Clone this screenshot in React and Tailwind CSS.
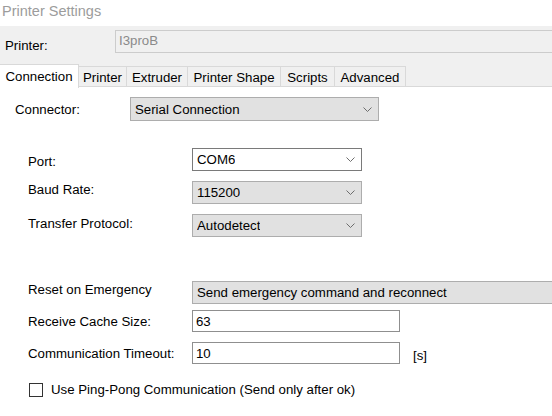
import React from 'react';

const font = { fontFamily: '"Liberation Sans", Arial, sans-serif' };

const Chevron = () => (
    <svg width="9" height="5" viewBox="0 0 9 5" className="shrink-0">
        <path d="M0.5 0.5 L4.5 4.5 L8.5 0.5" fill="none" stroke="#6d6d6d" strokeWidth="1" />
    </svg>
);

// combo box, gray (read only) or white (editable)
const Combo = ({ value, className, white }) => (
    <div
        className={
            'flex items-center justify-between pl-[4px] pr-[6px] border ' +
            (white ? 'bg-white border-[#7a7a7a] ' : 'bg-[#e1e1e1] border-[#adadad] ') +
            className
        }
    >
        <span className="truncate">{value}</span>
        <Chevron />
    </div>
);

const Field = ({ value, className }) => (
    <div className={'flex items-center pl-[3px] bg-white border border-[#8f8f8f] ' + className}>
        {value}
    </div>
);

const tabs = [
    { name: 'Connection', w: 'w-[79px]' },
    { name: 'Printer', w: 'w-[48px]' },
    { name: 'Extruder', w: 'w-[61px]' },
    { name: 'Printer Shape', w: 'w-[93px]' },
    { name: 'Scripts', w: 'w-[54px]' },
    { name: 'Advanced', w: 'w-[71px]' },
];

export default function App() {
    return (
        <div className="w-[552px] h-[416px] overflow-hidden bg-white text-[13.25px] leading-[15px] text-black flex flex-col" style={font}>
            {/* Title */}
            <div className="h-[26px] flex items-start pl-[2px] pt-[3px] text-[14.5px] leading-[17px] text-[#9c9c9c] shrink-0">
                Printer Settings
            </div>

            {/* Printer + tabs band */}
            <div className="bg-[#f0f0f0] shrink-0">
                <div className="flex items-start h-[37px] pt-[4px]">
                    <span className="w-[115px] pl-[5px] pt-[8px]">Printer:</span>
                    <div className="flex-1 h-[23px] border border-r-0 border-[#cccccc] bg-[#f0f0f0] text-[#8a8a8a] pl-[3px] pb-[2px] flex items-center -mr-[4px]">
                        I3proB
                    </div>
                </div>
                <div className="flex items-end h-[24px]">
                    {tabs.map((t, i) =>
                        i === 0 ? (
                            <div key={t.name} className={t.w + ' h-[24px] bg-white border-r border-t border-[#d9d9d9] flex items-center justify-center pb-[1px] -mb-px relative'}>
                                {t.name}
                            </div>
                        ) : (
                            <div key={t.name} className={t.w + ' h-[21px] border-r border-t border-b border-[#d9d9d9] flex items-center justify-center pt-[1px]'}>
                                {t.name}
                            </div>
                        )
                    )}
                    <div className="flex-1 border-b border-[#d9d9d9]" />
                </div>
            </div>

            {/* Connection panel */}
            <div className="flex flex-col">
                <div className="flex items-center mt-[10px]">
                    <span className="w-[130px] pl-[15px]">Connector:</span>
                    <Combo value="Serial Connection" className="w-[249px] h-[24px]" />
                </div>

                <div className="flex items-start mt-[27px]">
                    <span className="w-[192px] pl-[28px] pt-[6px]">Port:</span>
                    <Combo value="COM6" white className="w-[170px] h-[23px]" />
                </div>
                <div className="flex items-start mt-[10px]">
                    <span className="w-[192px] pl-[28px] pt-[1px]">Baud Rate:</span>
                    <Combo value="115200" className="w-[170px] h-[23px]" />
                </div>
                <div className="flex items-start mt-[10px]">
                    <span className="w-[192px] pl-[28px] pt-[2px]">Transfer Protocol:</span>
                    <Combo value="Autodetect" className="w-[170px] h-[23px]" />
                </div>

                <div className="flex items-start mt-[44px]">
                    <span className="w-[192px] pl-[28px] pt-[1px] shrink-0">Reset on Emergency</span>
                    <div className="w-[380px] h-[23px] shrink-0 bg-[#e1e1e1] border border-[#adadad] pl-[4px] flex items-center">
                        Send emergency command and reconnect
                    </div>
                </div>
                <div className="flex items-start mt-[6px]">
                    <span className="w-[192px] pl-[28px] pt-[4px]">Receive Cache Size:</span>
                    <Field value="63" className="w-[208px] h-[22px]" />
                </div>
                <div className="flex items-start mt-[10px]">
                    <span className="w-[192px] pl-[28px] pt-[4px]">Communication Timeout:</span>
                    <Field value="10" className="w-[208px] h-[22px]" />
                    <span className="ml-[13px] pt-[6px]">[s]</span>
                </div>

                <label className="flex items-center mt-[18px] pl-[29px]">
                    <span className="w-[14px] h-[14px] border border-[#333] bg-white shrink-0" />
                    <span className="ml-[8px]">Use Ping-Pong Communication (Send only after ok)</span>
                </label>
            </div>
        </div>
    );
}
